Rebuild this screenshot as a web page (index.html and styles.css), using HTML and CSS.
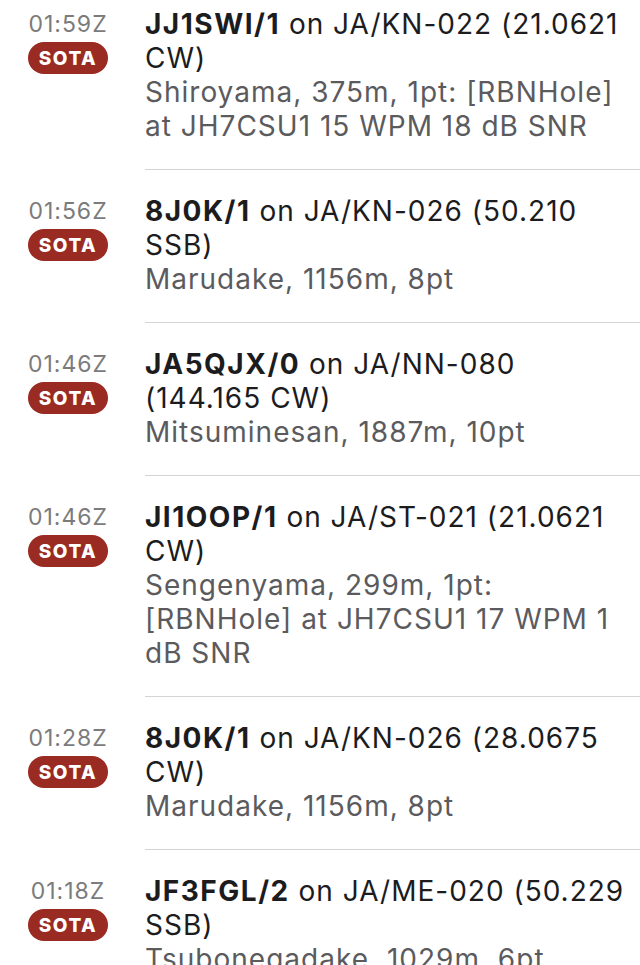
FILE: index.html
```html
<!DOCTYPE html>
<html lang="en">

<head>
  <meta charset="UTF-8">
  <meta name="viewport" content="width=device-width, initial-scale=1.0">
  <title>SOTA spots</title>
  <link rel="stylesheet" href="styles.css">
</head>

<body>
  <main>
    <ul class="spots">
      <li class="spot">
        <div class="spot-meta">
          <span class="spot-time">01:59Z</span>
          <span class="badge">SOTA</span>
        </div>
        <div class="spot-body">
          <p class="spot-title"><strong>JJ1SWI/1</strong> on JA/KN-022 (21.0621 CW)</p>
          <p class="spot-info">Shiroyama, 375m, 1pt: [RBNHole] at JH7CSU1 15 WPM 18 dB SNR</p>
        </div>
      </li>
      <li class="spot">
        <div class="spot-meta">
          <span class="spot-time">01:56Z</span>
          <span class="badge">SOTA</span>
        </div>
        <div class="spot-body">
          <p class="spot-title"><strong>8J0K/1</strong> on JA/KN-026 (50.210 SSB)</p>
          <p class="spot-info">Marudake, 1156m, 8pt</p>
        </div>
      </li>
      <li class="spot">
        <div class="spot-meta">
          <span class="spot-time">01:46Z</span>
          <span class="badge">SOTA</span>
        </div>
        <div class="spot-body">
          <p class="spot-title"><strong>JA5QJX/0</strong> on JA/NN-080 (144.165 CW)</p>
          <p class="spot-info">Mitsuminesan, 1887m, 10pt</p>
        </div>
      </li>
      <li class="spot">
        <div class="spot-meta">
          <span class="spot-time">01:46Z</span>
          <span class="badge">SOTA</span>
        </div>
        <div class="spot-body">
          <p class="spot-title"><strong>JI1OOP/1</strong> on JA/ST-021 (21.0621 CW)</p>
          <p class="spot-info">Sengenyama, 299m, 1pt: [RBNHole] at JH7CSU1 17 WPM 1 dB SNR</p>
        </div>
      </li>
      <li class="spot">
        <div class="spot-meta">
          <span class="spot-time">01:28Z</span>
          <span class="badge">SOTA</span>
        </div>
        <div class="spot-body">
          <p class="spot-title"><strong>8J0K/1</strong> on JA/KN-026 (28.0675 CW)</p>
          <p class="spot-info">Marudake, 1156m, 8pt</p>
        </div>
      </li>
      <li class="spot">
        <div class="spot-meta">
          <span class="spot-time">01:18Z</span>
          <span class="badge">SOTA</span>
        </div>
        <div class="spot-body">
          <p class="spot-title"><strong>JF3FGL/2</strong> on JA/ME-020 (50.229 SSB)</p>
          <p class="spot-info">Tsubonegadake, 1029m, 6pt</p>
        </div>
      </li>
    </ul>
  </main>
</body>

</html>
```

FILE: styles.css
```css
* {
  margin: 0;
  padding: 0;
}

*,
*::before,
*::after {
  box-sizing: border-box;
}

body {
  font-family: Inter, "Noto Sans", sans-serif;
  background: #fff;
  color: #1c1c1e;
  overflow: hidden;
  height: 100vh;
}

/* lista desplazada un poco hacia arriba, como en la captura */
.spots {
  list-style: none;
  margin-top: -17px;
}

.spot {
  display: flex;
}

.spot-meta {
  width: 80px;
  margin-left: 28px;
  padding-top: 24px;
  display: flex;
  flex-direction: column;
  align-items: center;
}

.spot-time {
  font-size: 23px;
  line-height: 34px;
  letter-spacing: 1px;
  color: #7b7b7b;
}

.badge {
  margin-top: 1px;
  width: 80px;
  height: 32px;
  border-radius: 16px;
  background: #9a2b22;
  color: #fff;
  font-size: 19px;
  font-weight: 800;
  display: flex;
  align-items: center;
  justify-content: center;
  letter-spacing: 1.5px;
}

.spot-body {
  flex: 1;
  margin-left: 37px;
  padding: 24px 10px 26px 0;
  border-bottom: 1px solid #d4d4d8;
  font-size: 28px;
  line-height: 34px;
  letter-spacing: 1px;
}

.spot-title strong {
  font-weight: 700;
  letter-spacing: 1.5px;
}

.spot-info {
  color: #5b5b5e;
}
```
